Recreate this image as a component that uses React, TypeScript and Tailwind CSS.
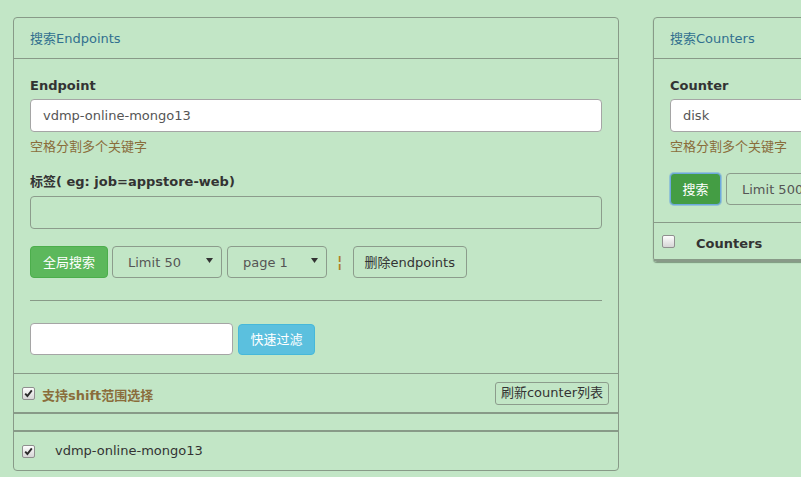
import React from "react";

const line = "border-[#889a88]";

function Check({ checked }: { checked?: boolean }) {
  return (
    <span className="inline-flex h-[13px] w-[13px] shrink-0 items-center justify-center rounded-[2px] border border-[#8f8f8f] bg-gradient-to-b from-[#fdfdfd] to-[#d6d6d6]">
      {checked && (
        <svg width="9" height="9" viewBox="0 0 9 9">
          <path d="M1.2 4.6 L3.4 7 L7.8 1.4" fill="none" stroke="#2b2b2b" strokeWidth="1.9" />
        </svg>
      )}
    </span>
  );
}

function Select({ label, width }: { label: string; width: string }) {
  return (
    <div
      className={`flex h-[32px] shrink-0 items-center justify-between rounded-[4px] border border-[#8c9c8c] pl-[15px] pr-[8px] text-[#555] ${width}`}
    >
      <span className="pt-[1px]">{label}</span>
      <svg width="7" height="5" viewBox="0 0 7 5" className="-mt-[4px]">
        <polygon points="0,0 7,0 3.5,5" fill="#333" />
      </svg>
    </div>
  );
}

function PanelHeader({ title }: { title: string }) {
  return (
    <div className={`border-b ${line} px-4 pb-[9px] pt-[11px] text-[#31708f]`}>{title}</div>
  );
}

function EndpointPanel() {
  return (
    <div className={`w-[606px] shrink-0 rounded-[4px] border ${line}`}>
      <PanelHeader title="搜索Endpoints" />
      <div className="px-4 pb-[18px] pt-4">
        <label className="mb-[3px] block pt-[1px] font-bold">Endpoint</label>
        <div className="flex h-[33px] items-center rounded-[4px] border border-[#a5a5a5] bg-white px-3 pt-[1px] text-[#555]">
          vdmp-online-mongo13
        </div>
        <p className="mt-[4px] pt-[1px] text-[#8a6d3b]">空格分割多个关键字</p>
        <label className="mb-[4px] mt-[14px] block pt-[1px] font-bold">标签( eg: job=appstore-web)</label>
        <div className="h-[33px] rounded-[4px] border border-[#8c9c8c]"></div>
        <div className="mt-[17px] flex h-[32px] items-center">
          <button className="h-[32px] rounded-[4px] border border-[#4cae4c] bg-[#5cb85c] px-3 pt-[1px] text-white">
            全局搜索
          </button>
          <div className="ml-[4px]">
            <Select label="Limit 50" width="w-[110px]" />
          </div>
          <div className="ml-[5px]">
            <Select label="page 1" width="w-[100px]" />
          </div>
          <span className="ml-[10px] text-[15px] font-bold text-[#b07f25]">¦</span>
          <button className="ml-[10px] h-[32px] rounded-[4px] border border-[#8c9c8c] px-[11px] pt-[1px] text-[#333]">
            删除endpoints
          </button>
        </div>
        <div className={`mt-[22px] border-t ${line}`}></div>
        <div className="mt-[22px] flex items-center">
          <div className="h-[32px] w-[203px] rounded-[4px] border border-[#a5a5a5] bg-white"></div>
          <button className="ml-[5px] h-[31px] w-[77px] rounded-[4px] border border-[#46b8da] bg-[#5bc0de] pt-[1px] text-white">
            快速过滤
          </button>
        </div>
      </div>
      <div className={`flex h-[41px] items-center border-b-2 border-t ${line} pl-2 pr-[9px]`}>
        <Check checked />
        <span className="ml-[7px] mt-[6px] font-bold text-[#8a6d3b]">支持shift范围选择</span>
        <button className="ml-auto h-[23px] rounded-[3px] border border-[#8c9c8c] px-[5px] leading-[20px] text-[#333]">
          刷新counter列表
        </button>
      </div>
      <div className={`h-[18px] border-b-2 ${line}`}></div>
      <div className="flex h-[38px] items-center pl-2">
        <Check checked />
        <span className="ml-[20px] text-[#333]">vdmp-online-mongo13</span>
      </div>
    </div>
  );
}

function CounterPanel() {
  return (
    <div className={`ml-[34px] w-[320px] shrink-0 rounded-[4px] border ${line} shadow-[0_1px_1px_rgba(80,100,80,0.6)]`}>
      <PanelHeader title="搜索Counters" />
      <div className="px-4 pb-[17px] pt-4">
        <label className="mb-[3px] block pt-[1px] font-bold">Counter</label>
        <div className="flex h-[33px] items-center rounded-[4px] border border-[#a5a5a5] bg-white px-3 pt-[1px] text-[#555]">
          disk
        </div>
        <p className="mt-[4px] pt-[1px] text-[#8a6d3b]">空格分割多个关键字</p>
        <div className="mt-[16px] flex h-[32px] items-center">
          <button className="h-[32px] w-[51px] rounded-[4px] border border-[#6ea8de] bg-[#449d44] pt-[1px] text-white shadow-[0_0_0_1px_rgba(110,168,222,0.55)]">
            搜索
          </button>
          <div className="ml-[5px]">
            <Select label="Limit 500" width="w-[130px]" />
          </div>
        </div>
      </div>
      <div className={`flex h-[39px] items-center border-b-2 border-t ${line} pl-2`}>
        <Check />
        <span className="ml-[21px] mt-[6px] font-bold text-[#333]">Counters</span>
      </div>
    </div>
  );
}

export default function App() {
  return (
    <div className="min-h-screen w-full overflow-hidden bg-[#c2e6c6] font-['DejaVu_Sans','Noto_Sans_CJK_SC',sans-serif] text-[13px] leading-[20px] text-[#333]">
      <div className="flex items-start pl-[13px] pt-[17px]">
        <EndpointPanel />
        <CounterPanel />
      </div>
    </div>
  );
}
